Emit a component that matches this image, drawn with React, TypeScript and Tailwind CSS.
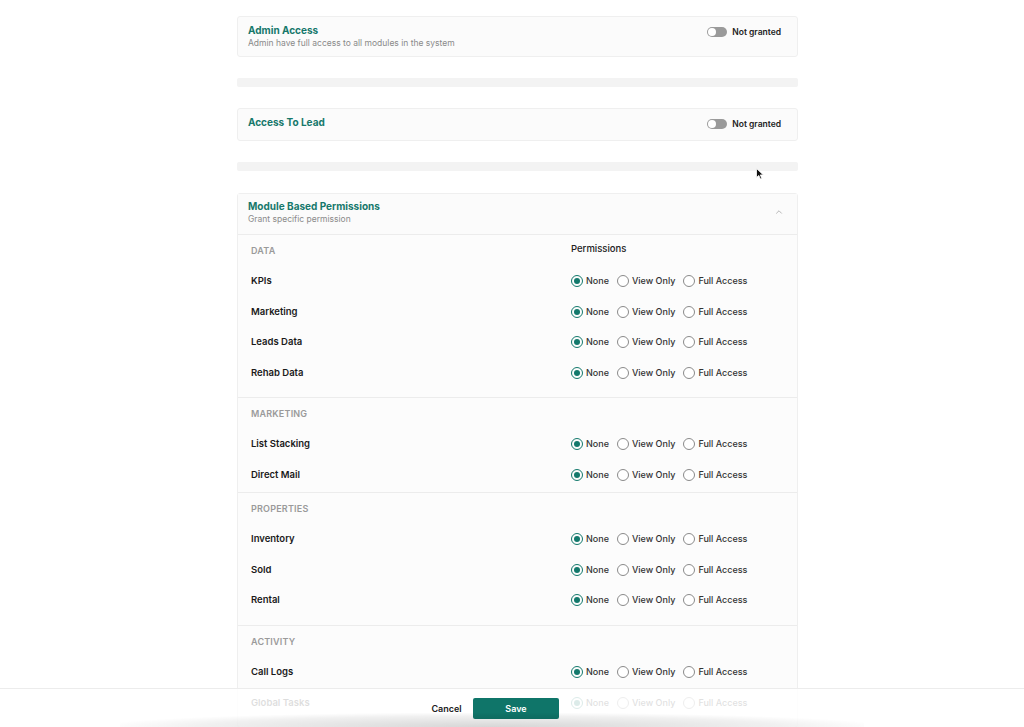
import React from "react";
import { ChevronUp } from "lucide-react";

const font = { fontFamily: "Inter, 'Noto Sans', sans-serif" };

type Section = { name: string; rows: string[]; pb: string; permHeader?: boolean };

const sections: Section[] = [
  { name: "DATA", rows: ["KPIs", "Marketing", "Leads Data", "Rehab Data"], pb: "pb-[9px]", permHeader: true },
  { name: "MARKETING", rows: ["List Stacking", "Direct Mail"], pb: "pb-[2px]" },
  { name: "PROPERTIES", rows: ["Inventory", "Sold", "Rental"], pb: "pb-[9.5px]" },
  { name: "ACTIVITY", rows: ["Call Logs", "Global Tasks"], pb: "pb-[9px]" },
];

function Toggle() {
  return (
    <div className="flex items-center h-[12px]">
      <div className="w-[20px] h-[10px] rounded-full bg-[#9a9a9a] flex items-center px-[1px]">
        <div className="w-[8px] h-[8px] rounded-full bg-white" />
      </div>
      <span className="ml-[5px] text-[8.5px] leading-[12px] font-semibold text-[#222]">Not granted</span>
    </div>
  );
}

function Radio({ checked, label }: { checked?: boolean; label: string }) {
  return (
    <div className="flex items-center">
      {checked ? (
        <div className="w-[12px] h-[12px] rounded-full border border-[#13796c] flex items-center justify-center">
          <div className="w-[6px] h-[6px] rounded-full bg-[#13796c]" />
        </div>
      ) : (
        <div className="w-[12px] h-[12px] rounded-full border border-[#8a8a8a] bg-white" />
      )}
      <span className="ml-[3px] text-[9px] leading-[12px] font-medium text-[#333]">{label}</span>
    </div>
  );
}

function RadioGroup() {
  return (
    <div className="flex items-center gap-[8px]">
      <Radio checked label="None" />
      <Radio label="View Only" />
      <Radio label="Full Access" />
    </div>
  );
}

export default function App() {
  return (
    <div className="relative w-full h-[727px] overflow-hidden bg-white" style={font}>
      <div className="pl-[237px] pt-[16px] w-[798px]">
        {/* Admin Access */}
        <div className="w-[561px] rounded-[3px] border border-[#efefef] bg-[#fbfbfb] pl-[10px] pr-[16px] pt-[6px] pb-[7px] flex justify-between items-start">
          <div>
            <div className="text-[10px] leading-[14px] font-bold text-[#16786b]">Admin Access</div>
            <div className="text-[8.5px] leading-[12px] text-[#8a8a8a]">Admin have full access to all modules in the system</div>
          </div>
          <div className="pt-[3px]">
            <Toggle />
          </div>
        </div>

        <div className="w-[561px] h-[9px] mt-[21px] rounded-[2px] bg-[#f3f3f3]" />

        {/* Access To Lead */}
        <div className="w-[561px] mt-[21px] rounded-[3px] border border-[#efefef] bg-[#fbfbfb] pl-[10px] pr-[16px] pt-[6px] pb-[10px] flex justify-between items-start">
          <div className="text-[10px] leading-[14px] font-bold text-[#16786b]">Access To Lead</div>
          <div className="pt-[3px]">
            <Toggle />
          </div>
        </div>

        <div className="w-[561px] h-[9px] mt-[21px] rounded-[2px] bg-[#f3f3f3]" />

        {/* Module Based Permissions */}
        <div className="w-[561px] mt-[22px] rounded-[3px] border border-[#efefef] bg-[#fcfcfc]">
          <div className="h-[41px] pl-[10px] pr-[13px] pt-[5px] flex justify-between items-start border-b border-[#ececec] bg-[#fbfbfb]">
            <div>
              <div className="text-[10px] leading-[14px] font-bold text-[#16786b]">Module Based Permissions</div>
              <div className="text-[8.5px] leading-[12px] text-[#8a8a8a]">Grant specific permission</div>
            </div>
            <div className="pt-[8px]">
              <ChevronUp size={10} color="#aaaaaa" strokeWidth={2} />
            </div>
          </div>
          {sections.map((s, i) => (
            <div key={s.name} className={`pt-[1px] ${s.pb} ${i > 0 ? "border-t border-[#ececec]" : ""}`}>
              <div className="h-[30px] flex items-center pl-[13px]">
                <div className="w-[320px] text-[9px] font-semibold text-[#9a9a9a] tracking-[0.2px]">{s.name}</div>
                {s.permHeader && <div className="text-[9.5px] font-medium text-[#222] -mt-[4px]">Permissions</div>}
              </div>
              {s.rows.map((r) => (
                <div key={r} className="h-[30.5px] flex items-center pl-[13px]">
                  <div className="w-[320px] text-[9.5px] font-semibold text-[#1a1a1a]">{r}</div>
                  <RadioGroup />
                </div>
              ))}
            </div>
          ))}
        </div>
      </div>

      {/* cursor */}
      <svg className="absolute left-[756px] top-[168px]" width="8" height="12" viewBox="0 0 8 12">
        <path d="M0.5 0.5 L0.5 9.5 L2.8 7.4 L4.4 11 L5.8 10.4 L4.3 6.9 L7.3 6.9 Z" fill="#111" stroke="#fff" strokeWidth="0.8" />
      </svg>

      {/* Footer */}
      <div className="absolute left-0 right-0 bottom-0 h-[39px] bg-white/85 border-t border-[#ececec] flex justify-center items-start pt-[9px] pr-[40px]">
        <div className="flex items-center gap-[5px]">
          <button className="w-[43px] h-[21px] text-[9px] font-semibold text-[#222]">Cancel</button>
          <button className="w-[86px] h-[21px] rounded-[2px] bg-[#0f7569] text-white text-[9px] font-semibold">Save</button>
        </div>
        <div className="absolute left-[120px] right-[160px] bottom-0 h-[14px] bg-[radial-gradient(ellipse_at_bottom,rgba(0,0,0,0.16),rgba(0,0,0,0.06)_55%,transparent_75%)]" />
      </div>
    </div>
  );
}
